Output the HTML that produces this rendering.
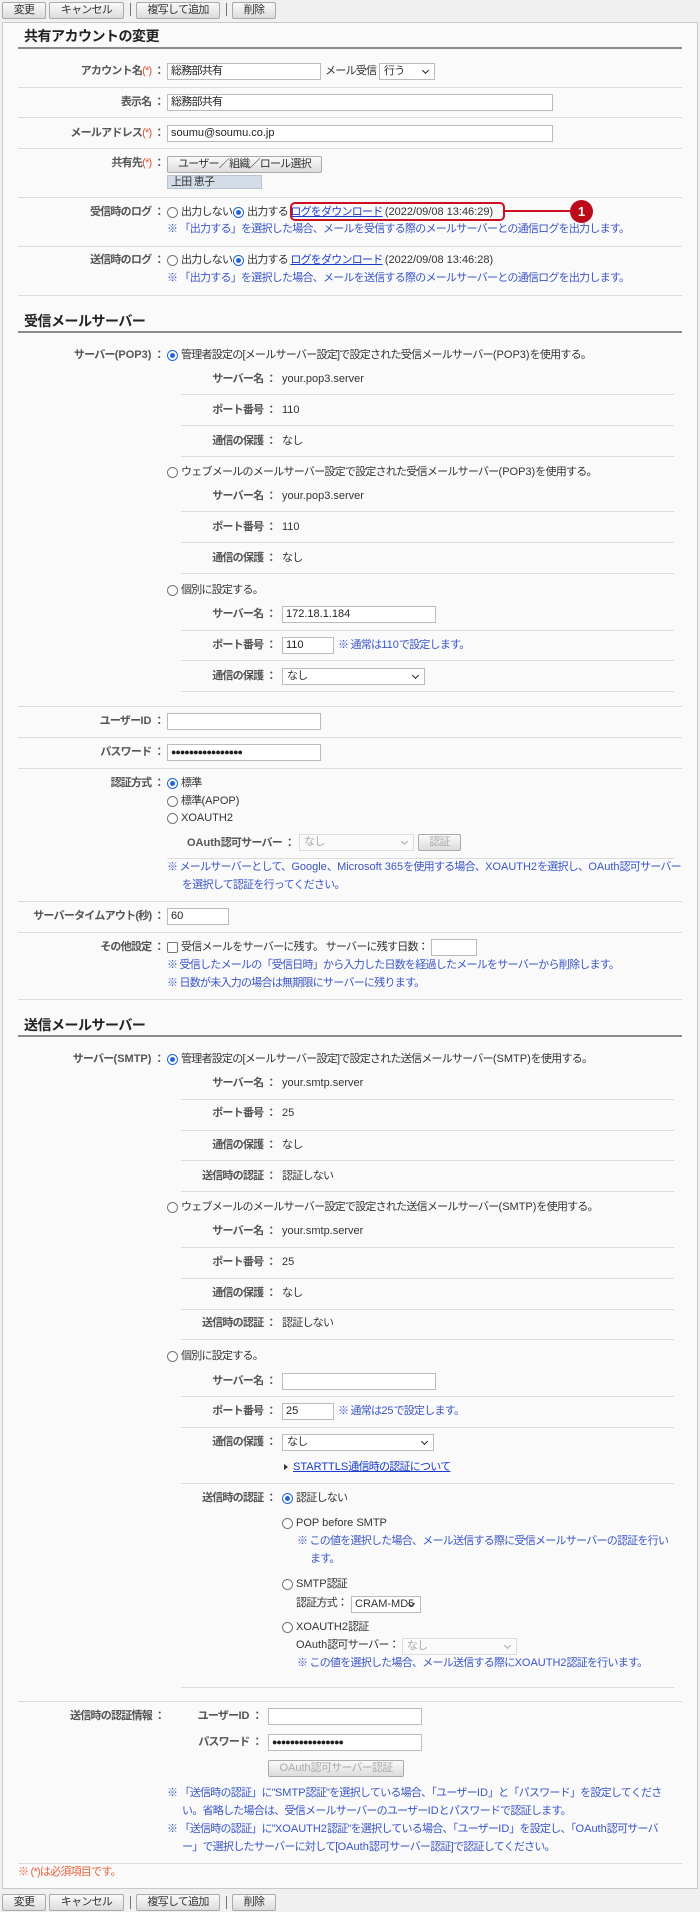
<!DOCTYPE html>
<html><head><meta charset="utf-8"><style>
*{margin:0;padding:0;box-sizing:border-box}
body{width:700px;height:1912px;background:#f0f0f0;position:relative;overflow:hidden;font-family:"Liberation Sans","Noto Sans CJK JP",sans-serif;font-size:11px;color:#333;letter-spacing:-0.75px}
.lat{letter-spacing:0}
.box{position:absolute;left:2px;top:22px;width:696px;height:1867px;background:#fafafa;border:1px solid #c8c8c8}
.t{position:absolute;white-space:nowrap;line-height:16px}
.l{position:absolute;white-space:nowrap;line-height:16px;text-align:right;font-weight:bold;color:#555}
.n{color:#3a55c8}
.h{position:absolute;height:1px;background:#dcdcdc}
.full{left:18px;width:664px}
.sub{left:181px;width:493px}
.hd{position:absolute;left:24px;font-size:14px;font-weight:bold;color:#222;line-height:20px;letter-spacing:-0.5px}
.ul{position:absolute;left:18px;width:664px;height:2px;background:#8a8a8a}
.in{position:absolute;background:#fff;border:1px solid #bbb;height:17px;line-height:15px;padding-left:3px;font-size:11px;color:#222}
.sel{position:absolute;background:#fff;border:1px solid #bbb;height:17px;line-height:15px;padding-left:4px;font-size:11px}
.sel:after{content:"";position:absolute;right:6px;top:4px;width:4px;height:4px;border-right:1.5px solid #222;border-bottom:1.5px solid #222;transform:rotate(45deg)}
.dis{color:#aaa;background:#fafafa;border-color:#ddd}
.dis:after{border-color:#aaa}
.btn{position:absolute;height:17px;border:1px solid #aaa;border-radius:2px;background:linear-gradient(#fafafa,#dcdcdc);text-align:center;line-height:15px;font-size:11px;color:#333}
.rd{position:absolute;width:11px;height:11px;border:1px solid #777;border-radius:50%;background:#fff}
.rd.on{border-color:#2266dd}
.rd.on:after{content:"";position:absolute;left:2px;top:2px;width:5px;height:5px;border-radius:50%;background:#2266dd}
a{color:#1a3ccc;text-decoration:underline}
.sep{position:absolute;top:3px;width:1px;height:13px;background:#777}
</style></head><body>
<div class="btn" style="left:2px;top:2px;width:44px">変更</div>
<div class="btn" style="left:49px;top:2px;width:75px">キャンセル</div>
<div class="sep" style="left:130px"></div>
<div class="btn" style="left:136px;top:2px;width:84px">複写して追加</div>
<div class="sep" style="left:226px"></div>
<div class="btn" style="left:232px;top:2px;width:44px">削除</div>

<div class="box"></div>
<div class="hd" style="top:26px">共有アカウントの変更</div>
<div class="ul" style="top:47px"></div>

<div class="l" style="right:536px;top:63px">アカウント名<span style="color:#e05030;font-weight:normal">(*)</span> ：</div>
<div class="in" style="left:167px;top:63px;width:154px">総務部共有</div>
<div class="t" style="left:325px;top:63px">メール受信</div>
<div class="sel" style="left:379px;top:63px;width:56px">行う</div>
<div class="h full" style="top:87px"></div>

<div class="l" style="right:536px;top:94px">表示名 ：</div>
<div class="in" style="left:167px;top:94px;width:386px">総務部共有</div>
<div class="h full" style="top:117px"></div>

<div class="l" style="right:536px;top:125px">メールアドレス<span style="color:#e05030;font-weight:normal">(*)</span> ：</div>
<div class="in lat" style="left:167px;top:125px;width:386px">soumu@soumu.co.jp</div>
<div class="h full" style="top:148px"></div>

<div class="l" style="right:536px;top:155px">共有先<span style="color:#e05030;font-weight:normal">(*)</span> ：</div>
<div class="btn" style="left:167px;top:156px;width:155px">ユーザー／組織／ロール選択</div>
<div class="t" style="left:167px;top:175px;width:95px;height:14px;line-height:13px;background:#d4dde7;border:1px solid #b8c4d0;padding-left:3px">上田 恵子</div>
<div class="h full" style="top:197px"></div>

<div class="l" style="right:536px;top:204px">受信時のログ ：</div>
<div class="rd" style="left:167px;top:207px"></div><div class="t" style="left:181px;top:204px">出力しない</div>
<div class="rd on" style="left:233px;top:207px"></div><div class="t" style="left:247px;top:204px">出力する <a>ログをダウンロード</a> <span class="lat">(2022/09/08 13:46:29)</span></div>
<div style="position:absolute;left:290px;top:202px;width:215px;height:19px;border:2px solid #cc1020;border-radius:5px"></div>
<div style="position:absolute;left:505px;top:210px;width:66px;height:2px;background:#cc1020"></div>
<div style="position:absolute;left:570px;top:200px;width:23px;height:23px;border-radius:50%;background:#bb0a1a;color:#fff;font-weight:bold;font-size:13px;text-align:center;line-height:23px;letter-spacing:0">1</div>
<div class="t n" style="left:167px;top:221px">※ 「出力する」を選択した場合、メールを受信する際のメールサーバーとの通信ログを出力します。</div>
<div class="h full" style="top:246px"></div>

<div class="l" style="right:536px;top:252px">送信時のログ ：</div>
<div class="rd" style="left:167px;top:255px"></div><div class="t" style="left:181px;top:252px">出力しない</div>
<div class="rd on" style="left:233px;top:255px"></div><div class="t" style="left:247px;top:252px">出力する <a>ログをダウンロード</a> <span class="lat">(2022/09/08 13:46:28)</span></div>
<div class="t n" style="left:167px;top:270px">※ 「出力する」を選択した場合、メールを送信する際のメールサーバーとの通信ログを出力します。</div>
<div class="h full" style="top:295px"></div>

<div class="hd" style="top:311px">受信メールサーバー</div>
<div class="ul" style="top:331px"></div>

<div class="l" style="right:536px;top:347px">サーバー<span class="lat">(POP3)</span> ：</div>
<div class="rd on" style="left:167px;top:350px"></div><div class="t" style="left:181px;top:347px">管理者設定の[メールサーバー設定]で設定された受信メールサーバー<span class="lat">(POP3)</span>を使用する。</div>
<div class="l" style="right:424px;top:371px">サーバー名 ：</div><div class="t lat" style="left:282px;top:371px">your.pop3.server</div>
<div class="h sub" style="top:394px"></div>
<div class="l" style="right:424px;top:402px">ポート番号 ：</div><div class="t lat" style="left:282px;top:402px">110</div>
<div class="h sub" style="top:425px"></div>
<div class="l" style="right:424px;top:433px">通信の保護 ：</div><div class="t" style="left:282px;top:433px">なし</div>
<div class="h sub" style="top:456px"></div>
<div class="rd" style="left:167px;top:467px"></div><div class="t" style="left:181px;top:464px">ウェブメールのメールサーバー設定で設定された受信メールサーバー<span class="lat">(POP3)</span>を使用する。</div>
<div class="l" style="right:424px;top:488px">サーバー名 ：</div><div class="t lat" style="left:282px;top:488px">your.pop3.server</div>
<div class="h sub" style="top:511px"></div>
<div class="l" style="right:424px;top:519px">ポート番号 ：</div><div class="t lat" style="left:282px;top:519px">110</div>
<div class="h sub" style="top:542px"></div>
<div class="l" style="right:424px;top:550px">通信の保護 ：</div><div class="t" style="left:282px;top:550px">なし</div>
<div class="h sub" style="top:573px"></div>
<div class="rd" style="left:167px;top:585px"></div><div class="t" style="left:181px;top:582px">個別に設定する。</div>
<div class="l" style="right:424px;top:606px">サーバー名 ：</div><div class="in lat" style="left:282px;top:606px;width:154px">172.18.1.184</div>
<div class="h sub" style="top:630px"></div>
<div class="l" style="right:424px;top:637px">ポート番号 ：</div><div class="in lat" style="left:282px;top:637px;width:52px">110</div><div class="t n" style="left:338px;top:637px">※ 通常は<span class="lat">110</span>で設定します。</div>
<div class="h sub" style="top:660px"></div>
<div class="l" style="right:424px;top:668px">通信の保護 ：</div><div class="sel" style="left:282px;top:668px;width:143px">なし</div>
<div class="h sub" style="top:691px"></div>
<div class="h full" style="top:706px"></div>

<div class="l" style="right:536px;top:713px">ユーザー<span class="lat">ID</span> ：</div><div class="in" style="left:167px;top:713px;width:154px"></div>
<div class="h full" style="top:737px"></div>
<div class="l" style="right:536px;top:744px">パスワード ：</div><div class="in" style="left:167px;top:744px;width:154px;font-size:9px;letter-spacing:-1px">●●●●●●●●●●●●●●●●</div>
<div class="h full" style="top:768px"></div>

<div class="l" style="right:536px;top:775px">認証方式 ：</div>
<div class="rd on" style="left:167px;top:778px"></div><div class="t" style="left:181px;top:775px">標準</div>
<div class="rd" style="left:167px;top:796px"></div><div class="t" style="left:181px;top:793px">標準<span class="lat">(APOP)</span></div>
<div class="rd" style="left:167px;top:813px"></div><div class="t lat" style="left:181px;top:810px">XOAUTH2</div>
<div class="l" style="left:187px;top:835px;text-align:left"><span class="lat">OAuth</span>認可サーバー ：</div>
<div class="sel dis" style="left:299px;top:834px;width:115px">なし</div>
<div class="btn" style="left:418px;top:834px;width:43px;color:#aaa">認証</div>
<div class="h" style="left:167px;width:507px;top:858px"></div>
<div class="t n" style="left:167px;top:859px">※ メールサーバーとして、<span class="lat">Google</span>、<span class="lat">Microsoft 365</span>を使用する場合、<span class="lat">XOAUTH2</span>を選択し、<span class="lat">OAuth</span>認可サーバー</div>
<div class="t n" style="left:182px;top:877px">を選択して認証を行ってください。</div>
<div class="h full" style="top:901px"></div>

<div class="l" style="right:536px;top:908px">サーバータイムアウト(秒) ：</div><div class="in lat" style="left:167px;top:908px;width:62px">60</div>
<div class="h full" style="top:932px"></div>
<div class="l" style="right:536px;top:939px">その他設定 ：</div>
<div style="position:absolute;left:167px;top:942px;width:11px;height:11px;border:1px solid #777;background:#fff;border-radius:2px"></div>
<div class="t" style="left:181px;top:939px">受信メールをサーバーに残す。 サーバーに残す日数：</div>
<div class="in" style="left:431px;top:939px;width:46px"></div>
<div class="t n" style="left:167px;top:957px">※ 受信したメールの「受信日時」から入力した日数を経過したメールをサーバーから削除します。</div>
<div class="t n" style="left:167px;top:975px">※ 日数が未入力の場合は無期限にサーバーに残ります。</div>
<div class="h full" style="top:999px"></div>

<div class="hd" style="top:1015px">送信メールサーバー</div>
<div class="ul" style="top:1035px"></div>

<div class="l" style="right:536px;top:1051px">サーバー<span class="lat">(SMTP)</span> ：</div>
<div class="rd on" style="left:167px;top:1054px"></div><div class="t" style="left:181px;top:1051px">管理者設定の[メールサーバー設定]で設定された送信メールサーバー<span class="lat">(SMTP)</span>を使用する。</div>
<div class="l" style="right:424px;top:1075px">サーバー名 ：</div><div class="t lat" style="left:282px;top:1075px">your.smtp.server</div>
<div class="h sub" style="top:1099px"></div>
<div class="l" style="right:424px;top:1105px">ポート番号 ：</div><div class="t lat" style="left:282px;top:1105px">25</div>
<div class="h sub" style="top:1130px"></div>
<div class="l" style="right:424px;top:1137px">通信の保護 ：</div><div class="t" style="left:282px;top:1137px">なし</div>
<div class="h sub" style="top:1160px"></div>
<div class="l" style="right:424px;top:1168px">送信時の認証 ：</div><div class="t" style="left:282px;top:1168px">認証しない</div>
<div class="h sub" style="top:1191px"></div>
<div class="rd" style="left:167px;top:1202px"></div><div class="t" style="left:181px;top:1199px">ウェブメールのメールサーバー設定で設定された送信メールサーバー<span class="lat">(SMTP)</span>を使用する。</div>
<div class="l" style="right:424px;top:1223px">サーバー名 ：</div><div class="t lat" style="left:282px;top:1223px">your.smtp.server</div>
<div class="h sub" style="top:1247px"></div>
<div class="l" style="right:424px;top:1254px">ポート番号 ：</div><div class="t lat" style="left:282px;top:1254px">25</div>
<div class="h sub" style="top:1278px"></div>
<div class="l" style="right:424px;top:1285px">通信の保護 ：</div><div class="t" style="left:282px;top:1285px">なし</div>
<div class="h sub" style="top:1309px"></div>
<div class="l" style="right:424px;top:1315px">送信時の認証 ：</div><div class="t" style="left:282px;top:1315px">認証しない</div>
<div class="h sub" style="top:1339px"></div>
<div class="rd" style="left:167px;top:1351px"></div><div class="t" style="left:181px;top:1348px">個別に設定する。</div>
<div class="l" style="right:424px;top:1373px">サーバー名 ：</div><div class="in" style="left:282px;top:1373px;width:154px"></div>
<div class="h sub" style="top:1396px"></div>
<div class="l" style="right:424px;top:1403px">ポート番号 ：</div><div class="in lat" style="left:282px;top:1403px;width:52px">25</div><div class="t n" style="left:338px;top:1403px">※ 通常は<span class="lat">25</span>で設定します。</div>
<div class="h sub" style="top:1427px"></div>
<div class="l" style="right:424px;top:1434px">通信の保護 ：</div><div class="sel" style="left:282px;top:1434px;width:152px">なし</div>
<div style="position:absolute;left:284px;top:1464px;width:0;height:0;border-left:4px solid #333;border-top:3.5px solid transparent;border-bottom:3.5px solid transparent"></div>
<div class="t" style="left:293px;top:1459px"><a><span class="lat">STARTTLS</span>通信時の認証について</a></div>
<div class="h sub" style="top:1483px"></div>

<div class="l" style="right:424px;top:1490px">送信時の認証 ：</div>
<div class="rd on" style="left:282px;top:1493px"></div><div class="t" style="left:296px;top:1490px">認証しない</div>
<div class="rd" style="left:282px;top:1518px"></div><div class="t lat" style="left:296px;top:1515px">POP before SMTP</div>
<div class="t n" style="left:297px;top:1533px">※ この値を選択した場合、メール送信する際に受信メールサーバーの認証を行い</div>
<div class="t n" style="left:310px;top:1551px">ます。</div>
<div class="rd" style="left:282px;top:1579px"></div><div class="t" style="left:296px;top:1576px"><span class="lat">SMTP</span>認証</div>
<div class="t" style="left:296px;top:1595px">認証方式：</div><div class="sel lat" style="left:351px;top:1596px;width:70px;padding-left:3px">CRAM-MD5</div>
<div class="rd" style="left:282px;top:1622px"></div><div class="t" style="left:296px;top:1619px"><span class="lat">XOAUTH2</span>認証</div>
<div class="t" style="left:296px;top:1637px"><span class="lat">OAuth</span>認可サーバー：</div><div class="sel dis" style="left:402px;top:1638px;width:115px">なし</div>
<div class="t n" style="left:297px;top:1655px">※ この値を選択した場合、メール送信する際に<span class="lat">XOAUTH2</span>認証を行います。</div>
<div class="h sub" style="top:1687px"></div>
<div class="h full" style="top:1701px"></div>

<div class="l" style="left:70px;top:1708px;text-align:left">送信時の認証情報 ：</div>
<div class="l" style="right:438px;top:1708px">ユーザー<span class="lat">ID</span> ：</div><div class="in" style="left:268px;top:1708px;width:154px"></div>
<div class="l" style="right:438px;top:1734px">パスワード ：</div><div class="in" style="left:268px;top:1734px;width:154px;font-size:9px;letter-spacing:-1px">●●●●●●●●●●●●●●●●</div>
<div class="btn" style="left:268px;top:1760px;width:136px;color:#aaa"><span class="lat">OAuth</span>認可サーバー認証</div>
<div class="t n" style="left:167px;top:1785px">※ 「送信時の認証」に"<span class="lat">SMTP</span>認証"を選択している場合、「ユーザー<span class="lat">ID</span>」と「パスワード」を設定してくださ</div>
<div class="t n" style="left:182px;top:1803px">い。省略した場合は、受信メールサーバーのユーザー<span class="lat">ID</span>とパスワードで認証します。</div>
<div class="t n" style="left:167px;top:1821px">※ 「送信時の認証」に"<span class="lat">XOAUTH2</span>認証"を選択している場合、「ユーザー<span class="lat">ID</span>」を設定し、「<span class="lat">OAuth</span>認可サーバ</div>
<div class="t n" style="left:182px;top:1839px">ー」で選択したサーバーに対して[<span class="lat">OAuth</span>認可サーバー認証]で認証してください。</div>
<div class="h full" style="top:1863px"></div>
<div class="t" style="left:18px;top:1864px;color:#e8603a">※ (*)は必須項目です。</div>

<div class="btn" style="left:2px;top:1894px;width:44px">変更</div>
<div class="btn" style="left:49px;top:1894px;width:75px">キャンセル</div>
<div class="sep" style="left:130px;top:1896px"></div>
<div class="btn" style="left:136px;top:1894px;width:84px">複写して追加</div>
<div class="sep" style="left:226px;top:1896px"></div>
<div class="btn" style="left:232px;top:1894px;width:44px">削除</div>
</body></html>
